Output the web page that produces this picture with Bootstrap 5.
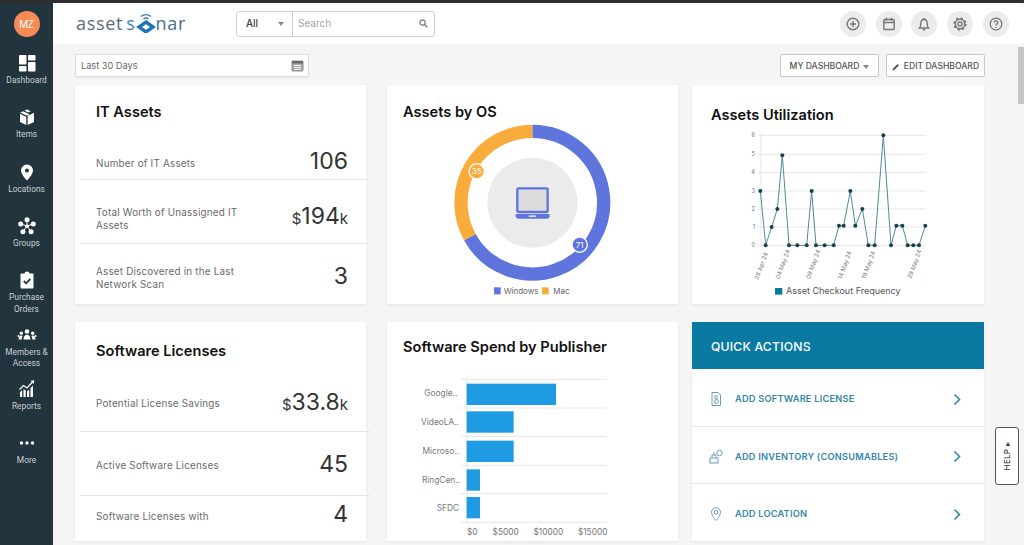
<!DOCTYPE html>
<html lang="en">
<head>
<meta charset="utf-8">
<title>AssetSonar Dashboard</title>
<link href="https://cdn.jsdelivr.net/npm/bootstrap@5.3.0/dist/css/bootstrap.min.css" rel="stylesheet">
<style>
html,body{height:545px;overflow:hidden;background:#f5f5f5;font-family:Inter,"Liberation Sans",sans-serif}
.topband{height:3px;background:#2e2e2e}
.shell{height:542px}
.side{width:53px;background:#22343d;color:#c9d1d5;flex:none}
.avatar{width:26px;height:26px;background:#f58b57;color:#fff;font-size:10px;font-family:Roboto,sans-serif;margin:8px auto 16px}
.nav-cell{height:54.35px;font-family:Roboto,sans-serif;font-size:8.4px;line-height:11.5px;text-align:center}
.nav-cell svg{display:block;margin:0 auto 2px;height:20px;width:20px}
.top{height:41px;background:#fff;border-top-right-radius:8px;padding:0 15px 0 23px}
.brand{width:160px;font-size:18px;font-weight:400;letter-spacing:.7px;color:#5d6c7c;font-family:"Open Sans",sans-serif;line-height:1;white-space:nowrap}
.brand b{font-weight:400;color:#3a7fb0;margin-left:3px}
.brand span{color:#3f6f96}
.brand svg{width:20px;height:22px;margin:-8px -1px 0 1px;vertical-align:middle}
.searchbox{width:199px;height:26px;border:1px solid #cfcfcf;border-radius:3px;font-size:10px}
.searchall{width:56px;border-right:1px solid #cfcfcf;font-weight:500;color:#444;padding:0 8px 0 9px}
.caret-mini{width:0;height:0;border:3px solid transparent;border-top:4px solid #888;border-bottom:0}
.searchtxt{color:#a5a5a5;padding:0 6px 0 5px;font-size:10px}
.round{width:26px;height:26px;background:#ececec;margin-left:9.8px}
.round svg{width:16px;height:16px}
.content{padding:10px 0 0 22px;position:relative}
.bar2{height:23px;width:910px;margin-bottom:8px}
.datebox{width:234px;height:23px;background:#fff;border:1px solid #dedede;border-radius:2px;font-size:9.2px;color:#666;padding:0 4px 0 5px;box-shadow:0 1px 2px rgba(0,0,0,.05)}
.tool{height:23px;width:99px;font-size:8.6px;font-weight:500;color:#555;background:#fff;border:1px solid #c9c9c9;border-radius:2px;padding:2px 0 0;margin-left:7px}
.tool svg{width:8px;height:8px}
.board{display:grid;grid-template-columns:312px 305px 292px;grid-auto-rows:219px;row-gap:18px}
.tile{width:291px;height:219px;background:#fff;border:0;border-radius:0;box-shadow:0 1px 3px rgba(0,0,0,.07);overflow:visible}
.tile-w{width:292px}
.heading{font-size:14.6px;font-weight:600;color:#111;margin:0;line-height:20px;letter-spacing:0}
.stat-row{margin:0 -4px 0 5px;padding:0 22px 0 16px;border-bottom:1px solid #e4e4e4;font-size:9.9px;line-height:13px;color:#6a6a6a;letter-spacing:.2px}
.stat-row.last{border-bottom:0}
.stat-row span{max-width:165px}
.val{font-size:23px;font-weight:400;color:#333;letter-spacing:0;line-height:26px}
.val small{font-size:15px}
.s-a{height:95px;padding-bottom:5px}
.s-a>span:first-child{margin-bottom:4px}
.s-b{height:64px;padding-top:11px}
.s-b>span:first-child{margin-top:4px}
.s-c{height:60px;padding-top:4px}
.s-c>span:first-child{margin-top:3px}
.s-d{height:110px;padding-bottom:13px}
.s-d>span:first-child{margin-bottom:8px}
.s-e{height:64px;padding-top:1px}
.s-e>span:first-child{margin-top:2px}
.s-f{padding-top:5px}
.s-f>span:first-child{margin-top:9px}
.title-it{margin-top:17px}
.title-sw{margin-top:19px}
.chart{display:block}
.chart text{font-family:Inter,sans-serif}
.qhead{height:47px;background:#0b7aa3;color:#fff;font-size:12.2px;font-weight:500;padding:3px 19px 0;letter-spacing:.2px}
.qrow{padding:3px 22px 0 17px;border-bottom:1px solid #e6e6e6;font-size:9.25px;font-weight:600;color:#3587a8;letter-spacing:.2px}
.q1{height:58px}
.q2{height:57px}
.q3{height:57px;border-bottom:0}
.qrow svg.gl{width:14px;height:16px;margin-right:12px;flex:none}
.qrow svg.ch{width:10px;height:13px;margin-left:auto;flex:none}
.helptab{position:absolute;left:942px;top:383px;width:24px;height:58px;background:#fff;border:1px solid #555;border-radius:3px;font-size:8px;color:#333}
.helptab span{writing-mode:vertical-rl;text-orientation:sideways;transform:rotate(180deg);font-weight:500;letter-spacing:.3px}
.scrollthumb{position:absolute;right:0;top:3px;width:6px;height:57px;background:#c4c4c4}
.os-title{padding:17px 16px 2px}
.ut-title{padding:20px 19px 0;height:45px}
.sp-title{padding:15px 16px 0;height:40px}
</style>
</head>
<body>
<div class="topband"></div>
<div class="d-flex shell">
  <nav class="side d-flex flex-column">
    <div class="avatar rounded-circle d-flex align-items-center justify-content-center">MZ</div>
    <div class="nav-cell"><svg viewBox="0 0 20 20" fill="#fff"><rect x="2" y="2" width="7.500" height="9.500" rx=".8"/><rect x="11" y="2" width="7.500" height="5.500" rx=".8"/><rect x="2" y="13" width="7.500" height="5.500" rx=".8"/><rect x="11" y="9" width="7.500" height="9.500" rx=".8"/></svg>Dashboard</div>
    <div class="nav-cell"><svg viewBox="0 0 20 20" fill="#fff"><path d="M10 2.500 7.500 3.600 11 5.600 13.800 4.200zM6 4.300 3.200 5.500 10 8.800l2.800-1.400zM17 5.700 10.700 9v9l6.300-3zM3 6.800V15l6.300 3V9.900z"/></svg>Items</div>
    <div class="nav-cell"><svg viewBox="0 0 20 20"><path fill="#fff" fill-rule="evenodd" d="M10 2.500a6 6 0 0 0-6 6C4 12.600 10 18.500 10 18.500s6-5.900 6-10a6 6 0 0 0-6-6zm0 8a2 2 0 1 1 0-4 2 2 0 0 1 0 4z"/></svg>Locations</div>
    <div class="nav-cell"><svg viewBox="0 0 20 20" fill="#fff"><path d="M10 10 10 4.500M10 10 4 8M10 10 6 15.800M10 10 14 15.800M10 10 16 8" stroke="#fff" stroke-width="1"/><circle cx="10" cy="3.800" r="2.500"/><circle cx="3.700" cy="8" r="2.500"/><circle cx="16.300" cy="8" r="2.500"/><circle cx="5.900" cy="15.800" r="2.500"/><circle cx="14.100" cy="15.800" r="2.500"/><circle cx="10" cy="10.300" r="1.700"/></svg>Groups</div>
    <div class="nav-cell"><svg viewBox="0 0 20 20"><path fill="#fff" d="M4.500 3.500h3a2.500 2 0 0 1 5 0h3a1 1 0 0 1 1 1v13a1 1 0 0 1-1 1h-11a1 1 0 0 1-1-1v-13a1 1 0 0 1 1-1z"/><path d="m6.800 11 2.300 2.300 4.200-4.300" fill="none" stroke="#22343d" stroke-width="1.800"/></svg>Purchase<br>Orders</div>
    <div class="nav-cell"><svg viewBox="0 0 20 20" fill="#fff"><circle cx="10" cy="6.500" r="2.300"/><circle cx="4.300" cy="8.300" r="1.700"/><circle cx="15.700" cy="8.300" r="1.700"/><circle cx="1.500" cy="11" r="1"/><circle cx="18.500" cy="11" r="1"/><path d="M6.500 14.500c0-3 1.500-4.700 3.500-4.700s3.500 1.700 3.500 4.700zM1.500 14.500c0-2.500 1.200-4 2.800-4 .6 0 1 .2 1.300.5-.6.900-.9 2-.9 3.500zM18.500 14.500c0-2.500-1.200-4-2.800-4-.6 0-1 .2-1.300.5.600.900.900 2 .9 3.500z"/></svg>Members &amp;<br>Access</div>
    <div class="nav-cell"><svg viewBox="0 0 20 20"><path fill="#fff" d="M3 18v-5l2.200-1.800V18zM6.500 18v-8l2.200 1.500V18zM10 18v-5.500l2.200-2V18zM13.500 18V9l2.500-2.200V18z"/><path d="m2.500 10.500 4-4 3.500 2.500 6-6.500" fill="none" stroke="#fff" stroke-width="1.300"/><path fill="#fff" d="m13.500 1.800 3.700-.6-.5 3.700z"/></svg>Reports</div>
    <div class="nav-cell"><svg viewBox="0 0 20 20" fill="#fff"><circle cx="4.500" cy="10" r="1.700"/><circle cx="10" cy="10" r="1.700"/><circle cx="15.500" cy="10" r="1.700"/></svg>More</div>
  </nav>
  <div class="flex-grow-1">
    <header class="top d-flex align-items-center">
      <div class="brand">asset<b>s</b><svg viewBox="0 0 20 22"><path d="M5 5.500a7.500 7.500 0 0 1 10 0M7.500 8a3.800 3.800 0 0 1 5 0" fill="none" stroke="#2f7fb5" stroke-width="1.400"/><path d="M10 11 17 16 10 21 3 16z" fill="#fff" stroke="#1f74b8" stroke-width="3.400"/></svg><span>nar</span></div>
      <div class="searchbox d-flex align-items-stretch">
        <div class="searchall d-flex align-items-center justify-content-between"><span>All</span><i class="caret-mini"></i></div>
        <div class="searchtxt flex-grow-1 d-flex align-items-center justify-content-between"><span>Search</span><svg width="9" height="9" viewBox="0 0 10 10"><circle cx="4" cy="4" r="2.900" fill="none" stroke="#888" stroke-width="1.500"/><path d="m6.200 6.200 3 3" stroke="#888" stroke-width="1.800"/></svg></div>
      </div>
      <div class="ms-auto d-flex">
        <div class="round rounded-circle d-flex align-items-center justify-content-center"><svg viewBox="0 0 16 16" fill="none" stroke="#777" stroke-width="1.400"><circle cx="8" cy="8" r="5.800"/><path d="M8 5v6M5 8h6"/></svg></div>
        <div class="round rounded-circle d-flex align-items-center justify-content-center"><svg viewBox="0 0 16 16" fill="none" stroke="#777" stroke-width="1.400"><rect x="2.800" y="3.500" width="10.400" height="10" rx="1"/><path d="M2.800 6.500h10.400M5.500 1.800v3M10.500 1.800v3"/></svg></div>
        <div class="round rounded-circle d-flex align-items-center justify-content-center"><svg viewBox="0 0 16 16" fill="none" stroke="#777" stroke-width="1.400"><path d="M3.500 12h9c-1-1-1.300-2-1.300-4.500C11.200 5 10 3.500 8 3.500S4.800 5 4.800 7.500C4.800 10 4.500 11 3.500 12z"/><path d="M6.800 13.800h2.400M8 2v1.500"/></svg></div>
        <div class="round rounded-circle d-flex align-items-center justify-content-center"><svg viewBox="0 0 16 16" fill="none" stroke="#777"><circle cx="8" cy="8" r="2" stroke-width="1.400"/><circle cx="8" cy="8" r="4.700" stroke-width="1.500"/><circle cx="8" cy="8" r="5.800" stroke-width="1.700" stroke-dasharray="2.300 2.250"/></svg></div>
        <div class="round rounded-circle d-flex align-items-center justify-content-center"><svg viewBox="0 0 16 16" fill="none" stroke="#777" stroke-width="1.300"><circle cx="8" cy="8" r="5.800"/><path d="M6.200 6.500a1.800 1.700 0 1 1 2.800 1.400c-.7.500-1 .8-1 1.600"/><path d="M8 10.700v1.200"/></svg></div>
      </div>
    </header>
    <main class="content">
      <div class="bar2 d-flex align-items-center">
        <div class="datebox d-flex align-items-center justify-content-between"><span>Last 30 Days</span><svg width="13" height="13" viewBox="0 0 13 13"><rect x="1" y="2" width="11" height="10" rx="1" fill="#aaa" stroke="#777" stroke-width=".8"/><rect x="1" y="2" width="11" height="2.500" fill="#666"/><path d="M3 6h7v1H3zM3 8h7v1H3zM3 10h7v1H3z" fill="#eee"/></svg></div>
        <button class="tool btn d-flex align-items-center justify-content-center gap-1 ms-auto">MY DASHBOARD <i class="caret-mini"></i></button>
        <button class="tool btn d-flex align-items-center justify-content-center gap-1"><svg viewBox="0 0 8 8"><path d="M.5 7.500.9 5.700 5.500 1.100l1.400 1.400L2.300 7.100z" fill="#555"/></svg>EDIT DASHBOARD</button>
      </div>
      <div class="board">
        <section class="card tile">
          <div class="stat-row s-a d-flex align-items-end justify-content-between position-relative"><span>Number of IT Assets</span><span class="val">106</span><h2 class="heading position-absolute top-0 title-it">IT Assets</h2></div>
          <div class="stat-row s-b d-flex align-items-center justify-content-between"><span>Total Worth of Unassigned IT Assets</span><span class="val"><small>$</small>194<small>k</small></span></div>
          <div class="stat-row s-c last d-flex align-items-center justify-content-between"><span>Asset Discovered in the Last Network Scan</span><span class="val">3</span></div>
        </section>
        <section class="card tile">
          <h2 class="heading os-title">Assets by OS</h2>
          <svg class="chart" width="291" height="180" viewBox="-9 102 873 540">
            <path d="M427 124A214 214 0 1 1 239.600 441.400" fill="none" stroke="#5f75dd" stroke-width="40"/>
            <path d="M427 124A214 214 0 0 0 239.600 441.400" fill="none" stroke="#f9ab3c" stroke-width="40"/>
            <circle cx="427" cy="338" r="135" fill="#ebebeb"/>
            <rect x="382" y="295" width="91" height="71" rx="3" fill="#dcdcdc" stroke="#5f75dd" stroke-width="7"/>
            <path d="M377 372h102v5a9 9 0 0 1-9 9h-84a9 9 0 0 1-9-9z" fill="#5f75dd"/><rect x="416" y="376" width="22" height="5" fill="#dcdcdc"/>
            <circle cx="260" cy="244" r="23" fill="#f9ab3c" stroke="#fff" stroke-width="4"/><text x="260" y="253" text-anchor="middle" font-size="24" fill="#fff">35</text>
            <circle cx="569" cy="464" r="23" fill="#5f75dd" stroke="#fff" stroke-width="4"/><text x="569" y="473" text-anchor="middle" font-size="24" fill="#fff">71</text>
            <rect x="312" y="592" width="20" height="21" fill="#5f75dd"/><text x="341" y="612" font-size="24" fill="#666">Windows</text>
            <rect x="456" y="592" width="20" height="21" fill="#f9ab3c"/><text x="490" y="612" font-size="24" fill="#666">Mac</text>
          </svg>
        </section>
        <section class="card tile tile-w">
          <h2 class="heading ut-title">Assets Utilization</h2>
          <svg class="chart" width="292" height="174" viewBox="-9 120 876 522">
            <g stroke="#d9d9d9" stroke-width="2"><path d="M190 136H692M190 193H692M190 247H692M190 303H692M190 357H692M190 411H692M190 466H692M198 130V472"/></g>
            <g font-size="17" fill="#777" text-anchor="end"><text x="180" y="142">6</text><text x="180" y="199">5</text><text x="180" y="253">4</text><text x="180" y="309">3</text><text x="180" y="363">2</text><text x="180" y="417">1</text><text x="180" y="472">0</text></g>
            <polyline fill="none" stroke="#4f8b99" stroke-width="3" points="196,303 212,466 230,411 247,357 262,196 282,466 307,466 335,466 350,303 363,466 389,466 416,466 432,407 446,407 466,303 481,407 502,357 520,466 539,466 565,136 588,466 604,407 622,407 638,466 655,466 672,466 691,407"/>
            <g fill="#17424d"><circle cx="196" cy="303" r="6"/><circle cx="212" cy="466" r="6"/><circle cx="230" cy="411" r="6"/><circle cx="247" cy="357" r="6"/><circle cx="262" cy="196" r="6"/><circle cx="282" cy="466" r="6"/><circle cx="307" cy="466" r="6"/><circle cx="335" cy="466" r="6"/><circle cx="350" cy="303" r="6"/><circle cx="363" cy="466" r="6"/><circle cx="389" cy="466" r="6"/><circle cx="416" cy="466" r="6"/><circle cx="432" cy="407" r="6"/><circle cx="446" cy="407" r="6"/><circle cx="466" cy="303" r="6"/><circle cx="481" cy="407" r="6"/><circle cx="502" cy="357" r="6"/><circle cx="520" cy="466" r="6"/><circle cx="539" cy="466" r="6"/><circle cx="565" cy="136" r="6"/><circle cx="588" cy="466" r="6"/><circle cx="604" cy="407" r="6"/><circle cx="622" cy="407" r="6"/><circle cx="638" cy="466" r="6"/><circle cx="655" cy="466" r="6"/><circle cx="672" cy="466" r="6"/><circle cx="691" cy="407" r="6"/></g>
            <g font-size="18" fill="#777" text-anchor="end"><text transform="translate(219 490) rotate(-70)">28 Apr 24</text><text transform="translate(285 482) rotate(-70)">04 May 24</text><text transform="translate(376 482) rotate(-70)">09 May 24</text><text transform="translate(470 486) rotate(-70)">14 May 24</text><text transform="translate(541 486) rotate(-70)">19 May 24</text><text transform="translate(680 482) rotate(-70)">29 May 24</text></g>
            <rect x="240" y="594" width="22" height="20" fill="#0b7aa3"/><text x="273" y="612" font-size="27" fill="#555">Asset Checkout Frequency</text>
          </svg>
        </section>
        <section class="card tile">
          <div class="stat-row s-d d-flex align-items-end justify-content-between position-relative"><span>Potential License Savings</span><span class="val"><small>$</small>33.8<small>k</small></span><h2 class="heading position-absolute top-0 title-sw">Software Licenses</h2></div>
          <div class="stat-row s-e d-flex align-items-center justify-content-between"><span>Active Software Licenses</span><span class="val">45</span></div>
          <div class="stat-row s-f last d-flex align-items-start justify-content-between"><span>Software Licenses with</span><span class="val">4</span></div>
        </section>
        <section class="card tile">
          <h2 class="heading sp-title">Software Spend by Publisher</h2>
          <svg class="chart" width="291" height="179" viewBox="-9 111 873 537">
            <path d="M212 163H650M212 249H650M212 334H650M212 421H650M212 506H650M212 592H650M230 163V592" stroke="#d9d9d9" stroke-width="2" fill="none"/>
            <g fill="#1e9be3"><rect x="230" y="176" width="268" height="64"/><rect x="230" y="259" width="141" height="64"/><rect x="230" y="347" width="141" height="64"/><rect x="230" y="433" width="40" height="64"/><rect x="230" y="516" width="40" height="64"/></g>
            <g font-size="25" fill="#777" text-anchor="end"><text x="202" y="214">Google..</text><text x="207" y="301">VideoLA..</text><text x="207" y="386">Microso..</text><text x="210" y="473">RingCen..</text><text x="207" y="557">SFDC</text></g>
            <g font-size="25" fill="#777" text-anchor="middle"><text x="247" y="629">$0</text><text x="347" y="629">$5000</text><text x="475" y="629">$10000</text><text x="608" y="629">$15000</text></g>
          </svg>
        </section>
        <section class="card tile tile-w">
          <div class="qhead d-flex align-items-center">QUICK ACTIONS</div>
          <div class="qrow q1 d-flex align-items-center"><svg class="gl" viewBox="0 0 14 16" fill="none" stroke="#6a9cb3" stroke-width="1"><path d="M3 1.500h6l2.500 2.500v10.500H3z"/><path d="M5 5h4M5 7h4"/><circle cx="7.500" cy="10.500" r="2"/></svg>ADD SOFTWARE LICENSE<svg class="ch" viewBox="0 0 10 13" fill="none" stroke="#3587a8" stroke-width="1.600"><path d="m2.500 1.500 5 5-5 5"/></svg></div>
          <div class="qrow q2 d-flex align-items-center"><svg class="gl" viewBox="0 0 14 16" fill="none" stroke="#6a9cb3" stroke-width="1"><rect x="1" y="9" width="8" height="5"/><path d="M3 9V6h4v3M5 6V3"/><circle cx="10.500" cy="4" r="2.700"/></svg>ADD INVENTORY (CONSUMABLES)<svg class="ch" viewBox="0 0 10 13" fill="none" stroke="#3587a8" stroke-width="1.600"><path d="m2.500 1.500 5 5-5 5"/></svg></div>
          <div class="qrow q3 d-flex align-items-center"><svg class="gl" viewBox="0 0 14 16" fill="none" stroke="#6a9cb3" stroke-width="1"><path d="M7 14.500S2.500 9.800 2.500 6.300a4.500 4.500 0 0 1 9 0C11.500 9.800 7 14.500 7 14.500z"/><circle cx="7" cy="6.300" r="1.800"/></svg>ADD LOCATION<svg class="ch" viewBox="0 0 10 13" fill="none" stroke="#3587a8" stroke-width="1.600"><path d="m2.500 1.500 5 5-5 5"/></svg></div>
        </section>
      </div>
      <div class="helptab d-flex align-items-center justify-content-center"><span>HELP ▸</span></div>
      <div class="scrollthumb"></div>
    </main>
  </div>
</div>
<script src="https://cdn.jsdelivr.net/npm/bootstrap@5.3.0/dist/js/bootstrap.bundle.min.js"></script>
</body>
</html>
